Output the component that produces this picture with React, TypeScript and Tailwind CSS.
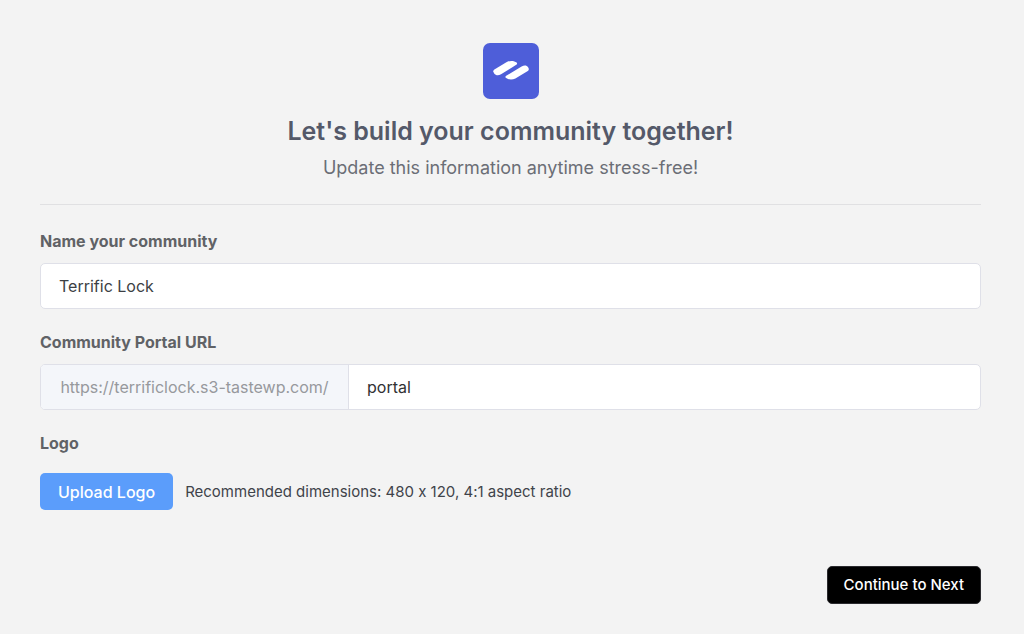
import { useId, useState } from "react";

function BrandMark() {
  return (
    <svg viewBox="0 0 56 56" className="h-14 w-14" role="img" aria-label="Community logo">
      <rect width="56" height="56" rx="7" fill="#4e5ed9" />
      <path d="M11.4 26.4 L23.8 19 C27.2 17.2 31.6 17.8 33.6 19.6 C34.4 20.4 34.2 21.2 33.3 21.8 L18 31.2 C15 33 12.6 32.2 11.2 30.4 C10 28.8 10 27.3 11.4 26.4 Z" fill="#fff" />
      <path d="M23.2 32.8 L38.6 23.4 C41.4 21.8 43.8 22.2 45.1 24.2 C46.2 25.8 46 27.1 44.8 27.9 L32.4 35.4 C29.2 37.2 24.6 36.6 22.8 34.8 C22.1 34 22.4 33.3 23.2 32.8 Z" fill="#fff" />
    </svg>
  );
}

export default function App() {
  const [name, setName] = useState("Terrific Lock");
  const [slug, setSlug] = useState("portal");
  const nameId = useId();
  const slugId = useId();
  const logoId = useId();

  return (
    <main className="min-h-screen bg-[#f3f3f3] pt-[43px] pr-[43px] pb-[30px] pl-10 font-['Inter',sans-serif] [font-feature-settings:'calt'_0]">
      <header className="flex flex-col items-center border-b border-[#e0e0e2] pb-6 text-center">
        <BrandMark />
        <h1 className="mt-4 text-[25px] leading-8 font-semibold text-[#545969]">
          Let's build your community together!
        </h1>
        <p className="mt-[9px] text-lg leading-6 text-[#6b6e76]">
          Update this information anytime stress-free!
        </p>
      </header>

      <form onSubmit={(e) => e.preventDefault()}>
        <div className="mt-6">
          <label htmlFor={nameId} className="block text-base leading-6 font-bold text-[#606266]">
            Name your community
          </label>
          <input
            id={nameId}
            value={name}
            onChange={(e) => setName(e.target.value)}
            className="mt-2.5 h-[46px] w-full rounded-[5px] border border-[#dfe0e8] bg-white px-[18px] text-base text-[#3c3f44] outline-none"
          />
        </div>

        <div className="mt-[21px]">
          <label htmlFor={slugId} className="block text-base leading-6 font-bold text-[#606266]">
            Community Portal URL
          </label>
          <div className="mt-2.5 flex h-[46px] overflow-hidden rounded-[5px] border border-[#dfe0e8] bg-white">
            <span className="flex w-[308px] items-center justify-center border-r border-[#dfe0e8] bg-[#f4f6fa] text-base text-[#97999d]">
              https://terrificlock.s3-tastewp.com/
            </span>
            <input
              id={slugId}
              value={slug}
              onChange={(e) => setSlug(e.target.value)}
              className="min-w-0 flex-1 px-[18px] text-base text-[#303133] outline-none"
            />
          </div>
        </div>

        <div className="mt-[21px]">
          <h2 id={logoId} className="text-base leading-6 font-bold text-[#606266]">Logo</h2>
          <div className="mt-[18px] flex items-center gap-3">
            <button
              type="button"
              aria-describedby={logoId}
              className="h-[37px] cursor-pointer rounded-[5px] bg-[#5b9dfb] px-[18px] text-base font-medium text-white"
            >
              Upload Logo
            </button>
            <span className="text-[15px] leading-6 text-[#3f434a]">
              Recommended dimensions: 480 x 120, 4:1 aspect ratio
            </span>
          </div>
        </div>

        <div className="mt-14 flex justify-end">
          <button
            type="submit"
            className="h-[38px] cursor-pointer rounded-[5px] border border-[#2a2a2e] bg-black px-4 text-[15px] font-medium text-white"
          >
            Continue to Next
          </button>
        </div>
      </form>
    </main>
  );
}
